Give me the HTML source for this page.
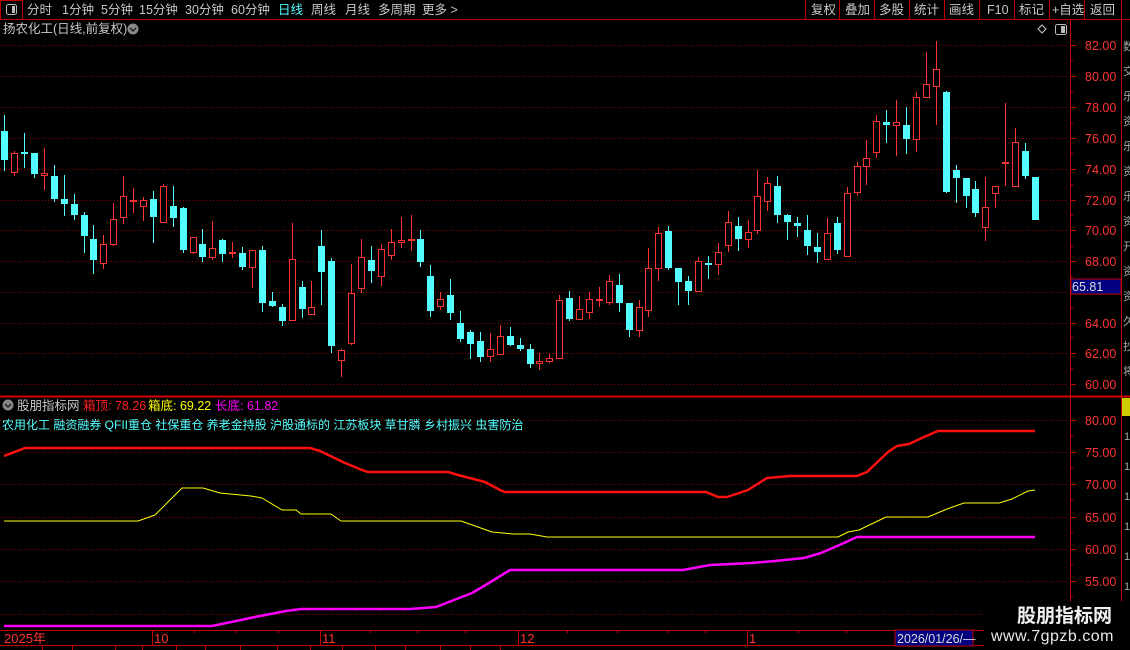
<!DOCTYPE html>
<html><head><meta charset="utf-8"><style>
html,body{margin:0;padding:0;background:#000;width:1130px;height:650px;overflow:hidden}
svg{display:block}
text{font-family:"Liberation Sans","Noto Sans CJK SC",sans-serif}
</style></head><body>
<svg width="1130" height="650" viewBox="0 0 1130 650" xmlns="http://www.w3.org/2000/svg">
<rect width="1130" height="650" fill="#000"/>
<g fill="#c8c8c8" font-size="12.5">
<rect x="0.5" y="0.5" width="22" height="19" fill="none" stroke="#c00000"/>
<rect x="6.5" y="4.5" width="10" height="10" rx="2" fill="none" stroke="#bbb"/>
<rect x="12" y="6" width="3" height="7" fill="#bbb"/>
<text x="27" y="14">分时</text><text x="62" y="14">1分钟</text><text x="101" y="14">5分钟</text>
<text x="139" y="14">15分钟</text><text x="185" y="14">30分钟</text><text x="231" y="14">60分钟</text>
<text x="278" y="14" fill="#54ffff">日线</text><text x="311" y="14">周线</text><text x="345" y="14">月线</text>
<text x="378" y="14">多周期</text><text x="422" y="14">更多 &gt;</text>
<text x="811" y="14">复权</text><text x="845" y="14">叠加</text><text x="879" y="14">多股</text>
<text x="914" y="14">统计</text><text x="949" y="14">画线</text><text x="987" y="14">F10</text>
<text x="1019" y="14">标记</text><text x="1052" y="14">+自选</text><text x="1090" y="14">返回</text>
</g>
<path d="M0 19.5H1130M805.5 0V19M839.5 0V19M874.5 0V19M909.5 0V19M944.5 0V19M979.5 0V19M1014.5 0V19M1049.5 0V19M1084.5 0V19M1121.5 0V19" stroke="#c00000"/>
<text x="3" y="33" font-size="12.5" fill="#c8c8c8">扬农化工(日线,前复权)</text>
<circle cx="133" cy="29" r="5.5" fill="#888"/><path d="M130 28l3 3 3-3" stroke="#222" stroke-width="1.5" fill="none"/>
<path d="M1042 25l4 4-4 4-4-4z" fill="none" stroke="#ccc"/>
<rect x="1055.5" y="24.5" width="11" height="10" rx="2" fill="none" stroke="#bbb"/><rect x="1061" y="26" width="4" height="7" fill="#bbb"/>
<path d="M1070.5 19V630M1121.5 19V650M0 396.5H1130M0 630.5H1070M0 645.5H1070" stroke="#c00000" stroke-width="1"/>
<path d="M0 396.5H1130" stroke="#d00000" stroke-width="2"/>
<g stroke="#900000" stroke-dasharray="1 2">
<path d="M0 45.5H1066M0 76.5H1066M0 107.5H1066M0 138.5H1066M0 169.5H1066M0 200.5H1066M0 230.5H1066M0 261.5H1066M0 292.5H1066M0 323.5H1066M0 353.5H1066M0 384.5H1066"/>
<path d="M0 420.5H1066M0 452.5H1066M0 484.5H1066M0 517.5H1066M0 549.5H1066M0 581.5H1066M0 614.5H1066"/>
</g>
<g stroke="#c00000">
<path d="M1070 45.5h6M1070 76.5h6M1070 107.5h6M1070 138.5h6M1070 169.5h6M1070 200.5h6M1070 230.5h6M1070 261.5h6M1070 292.5h6M1070 323.5h6M1070 353.5h6M1070 384.5h6"/>
<path d="M1070 61h3M1070 92h3M1070 123h3M1070 154h3M1070 185h3M1070 215h3M1070 246h3M1070 277h3M1070 308h3M1070 338h3M1070 369h3"/>
<path d="M1070 420.5h6M1070 452.5h6M1070 484.5h6M1070 517.5h6M1070 549.5h6M1070 581.5h6M1070 436h3M1070 468h3M1070 500h3M1070 533h3M1070 565h3M1070 597h3"/>
</g>
<g fill="#ff3333" font-size="12.5">
<text x="1085" y="50">82.00</text><text x="1085" y="81">80.00</text><text x="1085" y="112">78.00</text>
<text x="1085" y="143">76.00</text><text x="1085" y="174">74.00</text><text x="1085" y="205">72.00</text>
<text x="1085" y="235">70.00</text><text x="1085" y="266">68.00</text><text x="1085" y="328">64.00</text>
<text x="1085" y="358">62.00</text><text x="1085" y="389">60.00</text>
<text x="1085" y="425">80.00</text><text x="1085" y="457">75.00</text><text x="1085" y="489">70.00</text>
<text x="1085" y="522">65.00</text><text x="1085" y="554">60.00</text><text x="1085" y="586">55.00</text>
</g>
<rect x="1071" y="279" width="50" height="15" fill="#000080" stroke="#c00000"/>
<text x="1072" y="291" font-size="12.5" fill="#ddd">65.81</text>
<g fill="#aaa" font-size="11"><text x="1123" y="50">数</text><text x="1123" y="75">交</text><text x="1123" y="100">乐</text><text x="1123" y="125">资</text><text x="1123" y="150">乐</text><text x="1123" y="175">资</text><text x="1123" y="200">乐</text><text x="1123" y="225">资</text><text x="1123" y="250">开</text><text x="1123" y="275">资</text><text x="1123" y="300">资</text><text x="1123" y="325">久</text><text x="1123" y="350">抄</text><text x="1123" y="375">将</text>
<text x="1124" y="440">1</text><text x="1124" y="470">1</text><text x="1124" y="500">1</text><text x="1124" y="530">1</text><text x="1124" y="560">1</text><text x="1124" y="590">1</text></g>
<rect x="1122" y="398" width="8" height="18" fill="#cccc00"/>
<g fill="#54ffff">
<path stroke="#54ffff" d="M4.5 115V171M24.5 133V168M34.5 153V178M54.5 165V202M64.5 175V216M74.5 194V220M84.5 212V253M93.5 225V274M153.5 191V243M173.5 186V227M183.5 207V253M202.5 229V262M222.5 239V262M242.5 247V270M262.5 246V312M272.5 292V307M282.5 304V326M302.5 281V318M321.5 230V305M331.5 258V353M371.5 246V283M420.5 230V267M430.5 265V317M450.5 279V320M460.5 311V342M470.5 330V359M480.5 332V362M510.5 327V346M520.5 338V351M530.5 344V368M569.5 291V321M619.5 274V312M629.5 303V337M668.5 226V270M678.5 268V305M688.5 276V305M708.5 256V279M738.5 217V251M777.5 176V223M787.5 214V240M797.5 217V237M807.5 215V255M817.5 233V263M837.5 217V254M886.5 110V143M906.5 107V154M946.5 91V193M956.5 165V203M966.5 178V208M975.5 181V217M1025.5 143V179M1035.5 177V220"/>
<rect x="1" y="131" width="7" height="29"/><rect x="21" y="152" width="7" height="2"/><rect x="31" y="153" width="7" height="21"/>
<rect x="51" y="176" width="7" height="23"/><rect x="61" y="199" width="7" height="5"/><rect x="71" y="204" width="7" height="11"/>
<rect x="81" y="215" width="7" height="21"/><rect x="90" y="239" width="7" height="21"/><rect x="150" y="199" width="7" height="18"/>
<rect x="170" y="206" width="7" height="12"/><rect x="180" y="208" width="7" height="42"/><rect x="199" y="244" width="7" height="13"/>
<rect x="219" y="240" width="7" height="14"/><rect x="239" y="253" width="7" height="14"/><rect x="259" y="250" width="7" height="53"/>
<rect x="269" y="301" width="7" height="5"/><rect x="279" y="307" width="7" height="14"/><rect x="299" y="287" width="7" height="22"/>
<rect x="318" y="246" width="7" height="26"/><rect x="328" y="261" width="7" height="85"/><rect x="368" y="260" width="7" height="11"/>
<rect x="417" y="239" width="7" height="23"/><rect x="427" y="276" width="7" height="35"/><rect x="447" y="295" width="7" height="18"/>
<rect x="457" y="323" width="7" height="16"/><rect x="467" y="332" width="7" height="12"/><rect x="477" y="341" width="7" height="16"/>
<rect x="507" y="336" width="7" height="9"/><rect x="517" y="345" width="7" height="4"/><rect x="527" y="349" width="7" height="15"/>
<rect x="566" y="298" width="7" height="21"/><rect x="616" y="285" width="7" height="18"/><rect x="626" y="303" width="7" height="27"/>
<rect x="665" y="231" width="7" height="37"/><rect x="675" y="268" width="7" height="14"/><rect x="685" y="281" width="7" height="10"/>
<rect x="705" y="263" width="7" height="2"/><rect x="735" y="226" width="7" height="13"/><rect x="774" y="186" width="7" height="29"/>
<rect x="784" y="215" width="7" height="7"/><rect x="794" y="223" width="7" height="3"/><rect x="804" y="230" width="7" height="16"/>
<rect x="814" y="247" width="7" height="5"/><rect x="834" y="223" width="7" height="27"/><rect x="883" y="122" width="7" height="3"/>
<rect x="903" y="125" width="7" height="14"/><rect x="943" y="92" width="7" height="100"/><rect x="953" y="170" width="7" height="8"/>
<rect x="963" y="178" width="7" height="18"/><rect x="972" y="189" width="7" height="24"/><rect x="1022" y="151" width="7" height="25"/>
<rect x="1032" y="177" width="7" height="43"/>
</g>
<g stroke="#ff3232" fill="#000">
<path d="M14.5 151V176M44.5 148V190M103.5 235V269M113.5 203V246M123.5 176V224M133.5 188V213M143.5 197V221M163.5 184V223M193.5 237V254M212.5 221V260M232.5 242V258M252.5 250V288M292.5 223V321M311.5 281V315M341.5 349V377M351.5 264V345M361.5 239V293M381.5 244V286M391.5 229V260M401.5 217V248M411.5 215V251M440.5 292V310M490.5 333V362M500.5 325V355M539.5 353V370M549.5 354V363M559.5 295V359M579.5 296V320M589.5 292V319M599.5 287V307M609.5 275V305M639.5 300V337M648.5 248V317M658.5 227V281M698.5 257V292M718.5 243V275M728.5 211V252M748.5 220V248M757.5 170V234M767.5 177V211M827.5 218V260M847.5 187V257M857.5 162V196M866.5 140V185M876.5 115V158M896.5 100V156M916.5 92V152M926.5 52V98M936.5 41V125M985.5 177V241M995.5 186V208M1005.5 103V186M1015.5 128V187"/>
<rect x="11.5" y="153.5" width="6" height="19"/><rect x="41.5" y="173.5" width="6" height="2"/><rect x="100.5" y="244.5" width="6" height="19"/>
<rect x="110.5" y="219.5" width="6" height="25"/><rect x="120.5" y="196.5" width="6" height="21"/><rect x="140.5" y="200.5" width="6" height="6"/>
<rect x="160.5" y="186.5" width="6" height="36"/><rect x="190.5" y="237.5" width="6" height="15"/><rect x="209.5" y="248.5" width="6" height="9"/>
<rect x="249.5" y="250.5" width="6" height="17"/><rect x="289.5" y="259.5" width="6" height="61"/><rect x="308.5" y="307.5" width="6" height="7"/>
<rect x="338.5" y="350.5" width="6" height="10"/><rect x="348.5" y="293.5" width="6" height="50"/><rect x="358.5" y="257.5" width="6" height="31"/>
<rect x="378.5" y="249.5" width="6" height="27"/><rect x="388.5" y="242.5" width="6" height="13"/><rect x="398.5" y="240.5" width="6" height="2"/>
<rect x="437.5" y="299.5" width="6" height="7"/><rect x="487.5" y="349.5" width="6" height="7"/><rect x="497.5" y="336.5" width="6" height="18"/>
<rect x="536.5" y="361.5" width="6" height="2"/><rect x="546.5" y="358.5" width="6" height="3"/><rect x="556.5" y="300.5" width="6" height="58"/>
<rect x="576.5" y="309.5" width="6" height="10"/><rect x="586.5" y="299.5" width="6" height="13"/><rect x="606.5" y="281.5" width="6" height="21"/>
<rect x="636.5" y="307.5" width="6" height="23"/><rect x="645.5" y="268.5" width="6" height="42"/><rect x="655.5" y="233.5" width="6" height="35"/>
<rect x="695.5" y="261.5" width="6" height="30"/><rect x="715.5" y="252.5" width="6" height="12"/><rect x="725.5" y="222.5" width="6" height="23"/>
<rect x="745.5" y="232.5" width="6" height="7"/><rect x="754.5" y="196.5" width="6" height="34"/><rect x="764.5" y="183.5" width="6" height="18"/>
<rect x="824.5" y="233.5" width="6" height="26"/><rect x="844.5" y="193.5" width="6" height="63"/><rect x="854.5" y="166.5" width="6" height="26"/>
<rect x="863.5" y="158.5" width="6" height="8"/><rect x="873.5" y="121.5" width="6" height="31"/><rect x="893.5" y="122.5" width="6" height="3"/>
<rect x="913.5" y="97.5" width="6" height="42"/><rect x="923.5" y="84.5" width="6" height="13"/><rect x="933.5" y="69.5" width="6" height="17"/>
<rect x="982.5" y="207.5" width="6" height="20"/><rect x="992.5" y="186.5" width="6" height="7"/><rect x="1012.5" y="142.5" width="6" height="44"/>
</g>
<g fill="#ff3232"><rect x="130" y="200" width="7" height="2"/><rect x="229" y="252" width="7" height="2"/><rect x="408" y="239" width="7" height="2"/><rect x="596" y="299" width="7" height="2"/><rect x="1002" y="162" width="7" height="2"/></g>
<circle cx="8" cy="405" r="5.5" fill="#888"/><path d="M5 404l3 3 3-3" stroke="#222" stroke-width="1.5" fill="none"/>
<g font-size="12.5">
<text x="17" y="410" fill="#c8c8c8">股朋指标网</text>
<text x="83" y="410" fill="#ff2020">箱顶: 78.26</text>
<text x="148" y="410" fill="#ffff00">箱底: 69.22</text>
<text x="215" y="410" fill="#ff00ff">长底: 61.82</text>
<text x="2" y="429" fill="#54ffff" font-size="12">农用化工 融资融券 QFII重仓 社保重仓 养老金持股 沪股通标的 江苏板块 草甘膦 乡村振兴 虫害防治</text>
</g>
<g fill="none" stroke-linejoin="round">
<polyline stroke="#ff1010" stroke-width="2.5" points="4,456 25,448 310,448 320,451 345,463 362,470 368,472 448,472 458,475 485,482 500,490 505,492 706,492 718,497 727,497 748,490 767,478 790,476 857,476 867,472 888,452 897,446 909,444 924,437 938,431 1035,431"/>
<polyline stroke="#ffff00" stroke-width="1" points="4,521 138,521 155,515 182,488 203,488 220,493 251,496 262,498 282,510 296,510 301,514 331,514 341,521 461,521 492,532 513,534 530,534 547,537 838,537 848,532 859,530 886,517 928,517 947,509 964,503 999,503 1012,499 1028,491 1035,490"/>
<polyline stroke="#ff00ff" stroke-width="2.5" points="4,626 212,626 241,620 255,617 286,611 301,609 410,609 436,607 472,593 489,583 510,570 683,570 710,565 752,563 775,561 804,558 821,553 844,543 857,537 1035,537"/>
</g>
<path d="M152.5 630V645M320.5 630V645M518.5 630V645M747.5 630V645M194.5 630v3M236.5 630v3M278.5 630v3M370.5 630v3M417.5 630v3M465.5 630v3M567.5 630v3M617.5 630v3M667.5 630v3M705.5 630v3M798.5 630v3M846.5 630v3M42.5 645v5M72.5 645v5M115.5 645v5M142.5 645v5M176.5 645v5M205.5 645v5M240.5 645v5M277.5 645v5M310.5 645v5M342.5 645v5M375.5 645v5M405.5 645v5M440.5 645v5M470.5 645v5M500.5 645v5" stroke="#c00000"/>
<g fill="#ff3333" font-size="13"><text x="4" y="643">2025年</text><text x="154" y="643">10</text><text x="322" y="643">11</text><text x="520" y="643">12</text><text x="749" y="643">1</text></g>
<rect x="895" y="630" width="78" height="16" fill="#000080" stroke="#c00000"/>
<text x="897" y="643" font-size="12.5" fill="#ddd">2026/01/26/—</text>
<rect x="984" y="601" width="146" height="49" fill="#000"/>
<text x="1017" y="622" font-size="19" font-weight="bold" fill="#f0f0f0">股朋指标网</text>
<text x="991" y="641" font-size="16" fill="#e8e8e8" letter-spacing="0.5">www.7gpzb.com</text>
</svg>
</body></html>
